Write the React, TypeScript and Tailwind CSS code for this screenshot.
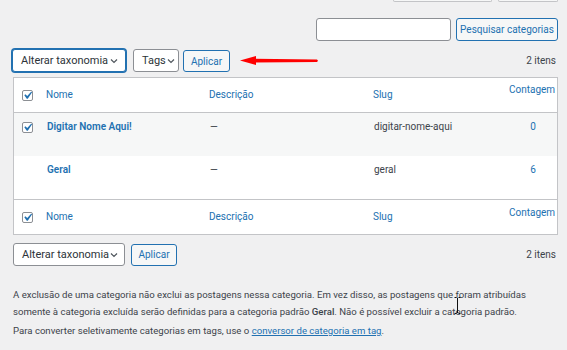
import React from "react";

const Chevron = () => (
  <svg width="10" height="10" viewBox="0 0 10 10" className="shrink-0">
    <path d="M2 3.5 L5 6.5 L8 3.5" fill="none" stroke="#50575e" strokeWidth="1.2" />
  </svg>
);

const Checkbox = () => (
  <div className="relative w-[11px] h-[11px] border border-[#8c8f94] rounded-[2px] bg-white shrink-0">
    <svg viewBox="0 0 20 20" className="absolute w-[15px] h-[15px] left-[-3px] top-[-3px]">
      <path d="M14.83 4.89l1.34.94-5.81 8.38H9.02L5.78 9.67l1.34-1.25 2.57 2.4z" fill="#2271b1" />
    </svg>
  </div>
);

const Select = ({ label, width, focused }: { label: string; width: string; focused?: boolean }) => (
  <div
    className={`flex items-center justify-between h-[23px] bg-white rounded-[3px] pl-[8px] pr-[6px] text-[11px] text-[#2c3338] ${width} ${
      focused ? "border border-[#2271b1] shadow-[0_0_0_1px_#2271b1]" : "border border-[#8c8f94]"
    }`}
  >
    <span className="whitespace-nowrap leading-none">{label}</span>
    <Chevron />
  </div>
);

const Button = ({ label, width, extra }: { label: string; width: string; extra?: string }) => (
  <div
    className={`flex items-center justify-center h-[22px] border border-[#2271b1] rounded-[3px] bg-[#f6f7f7] text-[#2271b1] text-[10px] whitespace-nowrap ${width} ${extra || ""}`}
  >
    <span className="leading-none pt-[1px]">{label}</span>
  </div>
);

const HeaderRow = ({ footer }: { footer?: boolean }) => (
  <div
    className={`flex h-[35px] text-[10px] text-[#2271b1] leading-[14px] ${
      footer ? "border-t border-[#c3c4c7]" : "border-b border-[#c3c4c7]"
    }`}
  >
    <div className="w-[32px] pl-[8px] flex items-center">
      <Checkbox />
    </div>
    <div className="w-[163px] flex items-center">Nome</div>
    <div className="w-[164px] flex items-center">Descrição</div>
    <div className="w-[136px] flex items-center">Slug</div>
    <div className={`w-[48px] whitespace-nowrap ${footer ? "pt-[6px]" : "pt-[5px]"}`}>Contagem</div>
  </div>
);

const DataRow = ({
  name,
  slug,
  count,
  checked,
  striped,
}: {
  name: string;
  slug: string;
  count: string;
  checked?: boolean;
  striped?: boolean;
}) => (
  <div className={`flex h-[43px] text-[10px] leading-[14px] ${striped ? "bg-[#f6f7f7]" : "bg-white"}`}>
    <div className="w-[32px] pl-[8px] pt-[9px]">{checked && <Checkbox />}</div>
    <div className="w-[163px] pt-[7px] pl-[1px] font-semibold text-[#2271b1] whitespace-nowrap">{name}</div>
    <div className="w-[164px] pt-[7px] pl-[1px] text-[#3c434a]">—</div>
    <div className="w-[136px] pt-[7px] pl-[1px] text-[#3c434a] whitespace-nowrap">{slug}</div>
    <div className="w-[48px] pt-[7px] text-center text-[#2271b1]">{count}</div>
  </div>
);

export default function App() {
  return (
    <div
      className="relative w-[567px] h-[350px] overflow-hidden bg-[#f0f0f1] text-[#3c434a]"
      style={{ fontFamily: 'Roboto, "Noto Sans", sans-serif' }}
    >
      {/* cut-off buttons at the top */}
      <div className="flex justify-end items-end h-[2px] pr-[9px] gap-[6px]">
        <div className="w-[99px] h-[2px] border-b border-x border-[#c3c4c7] rounded-b-[3px] bg-[#f6f7f7]" />
        <div className="w-[60px] h-[2px] border-b border-x border-[#c3c4c7] rounded-b-[3px] bg-[#f6f7f7]" />
      </div>

      {/* search */}
      <div className="flex justify-end gap-[5px] pr-[9px] mt-[16px] h-[23px]">
        <div className="w-[135px] h-[23px] bg-white border border-[#8c8f94] rounded-[3px]" />
        <Button label="Pesquisar categorias" width="w-[102px]" extra="h-[23px]" />
      </div>

      {/* top tablenav */}
      <div className="flex items-center h-[23px] mt-[8px] pl-[12px] pr-[11px]">
        <Select label="Alterar taxonomia" width="w-[114px]" focused />
        <div className="ml-[7px]">
          <Select label="Tags" width="w-[46px]" />
        </div>
        <Button label="Aplicar" width="w-[47px]" extra="ml-[4px] mt-[1px]" />
        <svg width="80" height="12" viewBox="0 0 80 12" className="ml-[10px]">
          <polygon points="0,5.5 16,1 16,10" fill="#f00" />
          <polygon points="14,3.8 77,4.5 78,5.7 77,7 14,7.4" fill="#f00" />
        </svg>
        <div className="ml-auto text-[10px] leading-none whitespace-nowrap">2 itens</div>
      </div>

      {/* table */}
      <div className="mt-[5px] ml-[13px] mr-[9px] border border-[#c3c4c7] bg-white">
        <HeaderRow />
        <DataRow name="Digitar Nome Aqui!" slug="digitar-nome-aqui" count="0" checked striped />
        <DataRow name="Geral" slug="geral" count="6" />
        <HeaderRow footer />
      </div>

      {/* bottom tablenav */}
      <div className="flex items-center h-[23px] mt-[8px] pl-[13px] pr-[11px]">
        <Select label="Alterar taxonomia" width="w-[112px]" />
        <Button label="Aplicar" width="w-[46px]" extra="ml-[6px]" />
        <div className="ml-auto text-[10px] leading-none whitespace-nowrap">2 itens</div>
      </div>

      {/* notes */}
      <div className="mt-[20px] pl-[13px] text-[9.6px] leading-[17px] text-[#3c434a] whitespace-nowrap">
        <p>
          A exclusão de uma categoria não exclui as postagens nessa categoria. Em vez disso, as postagens que foram atribuídas
          <br />
          somente à categoria excluída serão definidas para a categoria padrão <strong className="font-medium">Geral</strong>. Não é possível excluir a categoria padrão.
        </p>
        <p className="mt-[2px]">
          Para converter seletivamente categorias em tags, use o{" "}
          <span className="text-[#2271b1] underline">conversor de categoria em tag</span>.
        </p>
      </div>

      {/* text cursor */}
      <svg width="7" height="17" viewBox="0 0 7 17" className="absolute left-[454px] top-[297px]">
        <path d="M0.5 0.5 H2.5 M4.5 0.5 H6.5 M3.5 1 V16 M0.5 16.5 H2.5 M4.5 16.5 H6.5" stroke="#111" strokeWidth="1" fill="none" />
      </svg>
    </div>
  );
}
